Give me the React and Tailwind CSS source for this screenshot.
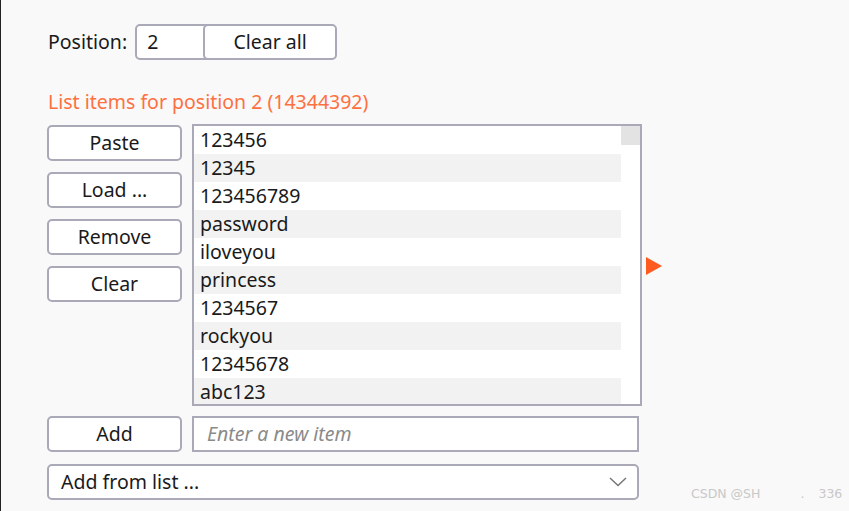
import React from "react";

const items = ["123456","12345","123456789","password","iloveyou","princess","1234567","rockyou","12345678","abc123"];

function Btn({ children }) {
  return (
    <button className="w-[135px] h-[36px] rounded-[5px] border-2 border-[#a9a9b8] bg-white text-[19.5px] text-[#1a1a1a] flex items-center justify-center">
      {children}
    </button>
  );
}

export default function App() {
  return (
    <div className="w-[849px] h-[511px] bg-[#f9f9f9] border-l border-[#222] relative text-[#1a1a1a]" style={{ fontFamily: '"Noto Sans", "Open Sans", sans-serif' }}>
      <div className="pl-[46px] pt-[24px]">
        <div className="flex items-center h-[36px]">
          <span className="text-[19.5px] ml-[1px] mr-[8px]">Position:</span>
          <div className="flex">
            <div className="w-[74px] h-[36px] border-2 border-[#a9a9b8] rounded-l-[5px] bg-white text-[19.5px] pl-[10px] flex items-center">2</div>
            <button className="-ml-[6px] w-[134px] h-[36px] rounded-[5px] border-2 border-[#a9a9b8] bg-white text-[19.5px] flex items-center justify-center">Clear all</button>
          </div>
        </div>
        <div className="mt-[30px] ml-[1px] text-[19.5px] text-[#ff7040] leading-[24px]">List items for position 2 (14344392)</div>
        <div className="mt-[11px] flex">
          <div className="flex flex-col gap-[11px] w-[135px]">
            <Btn>Paste</Btn>
            <Btn>Load ...</Btn>
            <Btn>Remove</Btn>
            <Btn>Clear</Btn>
          </div>
          <div className="ml-[10px] -mt-[1px] w-[450px] h-[282px] border-2 border-[#a9a9b8] bg-white flex">
            <div className="flex-1 flex flex-col overflow-hidden">
              {items.map((it, i) => (
                <div key={it} className={`h-[28px] shrink-0 flex items-center pl-[6px] text-[19.5px] ${i % 2 === 1 ? "bg-[#f2f2f2]" : "bg-white"}`}>{it}</div>
              ))}
            </div>
            <div className="w-[19px] flex flex-col">
              <div className="h-[19px] bg-[#e3e3e3]" />
            </div>
          </div>
          <div className="ml-[4px] mt-[132px]">
            <svg width="16" height="18" viewBox="0 0 16 18"><polygon points="0,0 16,9 0,18" fill="#ff5a1f" /></svg>
          </div>
        </div>
        <div className="mt-[10px] flex">
          <Btn>Add</Btn>
          <div className="ml-[10px] w-[447px] h-[36px] border-2 border-[#a9a9b8] bg-white flex items-center pl-[13px] text-[19.5px] italic text-[#8a8a8a]">Enter a new item</div>
        </div>
        <div className="mt-[12px] w-[592px] h-[36px] border-2 border-[#a9a9b8] rounded-[5px] bg-white flex items-center justify-between pl-[12px] pr-[10px] text-[19.5px]">
          <span>Add from list ...</span>
          <svg width="18" height="10" viewBox="0 0 18 10"><polyline points="1,1 9,8.5 17,1" fill="none" stroke="#777" strokeWidth="1.5" /></svg>
        </div>
      </div>
      <div className="absolute left-[690px] top-[486px] whitespace-nowrap text-[12.5px] leading-[16px] text-[#c8c8c8] flex" style={{ fontFamily: '"DejaVu Sans", sans-serif' }}>
        <span>CSDN @SH</span><span className="ml-[40px]">.</span><span className="ml-[14px]">336</span>
      </div>
    </div>
  );
}
